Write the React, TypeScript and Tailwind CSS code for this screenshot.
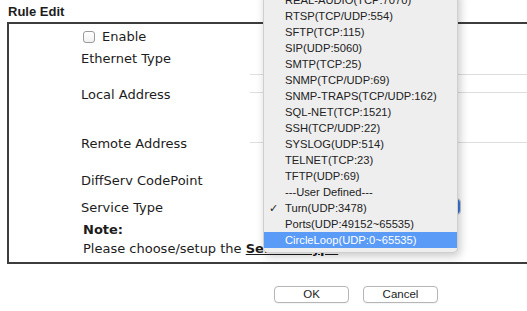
const menuItems = [
  "REAL-AUDIO(TCP:7070)",
  "RTSP(TCP/UDP:554)",
  "SFTP(TCP:115)",
  "SIP(UDP:5060)",
  "SMTP(TCP:25)",
  "SNMP(TCP/UDP:69)",
  "SNMP-TRAPS(TCP/UDP:162)",
  "SQL-NET(TCP:1521)",
  "SSH(TCP/UDP:22)",
  "SYSLOG(UDP:514)",
  "TELNET(TCP:23)",
  "TFTP(UDP:69)",
  "---User Defined---",
  "Turn(UDP:3478)",
  "Ports(UDP:49152~65535)",
  "CircleLoop(UDP:0~65535)",
];

const checked = "Turn(UDP:3478)";
const active = "CircleLoop(UDP:0~65535)";

const Label = ({ children }: { children: React.ReactNode }) => (
  <div className="w-[241px] shrink-0 pl-[72px] self-center">{children}</div>
);

export default function App() {
  return (
    <div className="relative w-[527px] h-[311px] overflow-hidden bg-white text-[#1c1c1c]">
      <div className="h-[22px] pl-[8px] pt-[4px] text-[13px] font-bold font-['Liberation_Sans',Arial,sans-serif] leading-[16px]">
        Rule Edit
      </div>

      <div className="ml-[7px] w-[640px] border-2 border-r-0 border-[#3c3c3c] font-['DejaVu_Sans',Verdana,sans-serif] text-[13px] leading-[16px]">
        <div className="flex h-[26px] items-center pl-[74px]">
          <span className="w-[12px] h-[12px] rounded-[3px] border border-[#9a9a9a] bg-gradient-to-b from-white to-[#f1f1f1]" />
          <span className="ml-[7px]">Enable</span>
        </div>
        <div className="flex h-[18px]">
          <Label>Ethernet Type</Label>
        </div>
        <div className="flex h-[54px]">
          <Label>Local Address</Label>
          <div className="flex-1">
            <div className="mt-[6px] h-[19px] border-y border-[#dedede]" />
          </div>
        </div>
        <div className="flex h-[44px]">
          <Label>Remote Address</Label>
          <div className="flex-1">
            <div className="h-[21px] border-b border-[#dedede]" />
          </div>
        </div>
        <div className="flex h-[30px]">
          <Label>DiffServ CodePoint</Label>
        </div>
        <div className="flex h-[23px]">
          <Label>Service Type</Label>
          <div className="flex-1">
            <div className="mt-[2px] ml-[16px] flex h-[17px] w-[195px] rounded-[4px] border border-[#c4c4c4] bg-white">
              <div className="ml-auto w-[18px] rounded-r-[4px] bg-[#3b78e0]" />
            </div>
          </div>
        </div>
        <div className="flex h-[21px] items-center pl-[74px] font-bold">Note:</div>
        <div className="flex h-[18px] items-center pl-[74px] whitespace-nowrap">
          Please choose/setup the&nbsp;
          <span className="font-bold underline">Service Type</span>
          &nbsp;first.
        </div>
        <div className="h-[4px]" />
      </div>

      <div className="mt-[22px] flex gap-[14px] pl-[274px] font-['Liberation_Sans',Arial,sans-serif] text-[11.5px]">
        <button className="h-[17px] w-[75px] rounded-[4px] border border-[#b5b5b5] bg-white leading-none shadow-[0_1px_0_rgba(0,0,0,0.04)]">
          OK
        </button>
        <button className="h-[17px] w-[75px] rounded-[4px] border border-[#b5b5b5] bg-white leading-none shadow-[0_1px_0_rgba(0,0,0,0.04)]">
          Cancel
        </button>
      </div>

      <div className="absolute left-[263px] top-[-9px] w-[195px] rounded-b-[5px] border border-[#cfcfcf] bg-[#eeeeee] pb-[4px] shadow-[2px_3px_10px_rgba(0,0,0,0.22)] font-['Liberation_Sans',Arial,sans-serif] text-[11.2px] text-[#222]">
        {menuItems.map((item) => (
          <div
            key={item}
            className={
              item === active
                ? "relative flex h-[16px] items-center bg-[#5a9bf8] pl-[21px] text-white"
                : "relative flex h-[16px] items-center pl-[21px]"
            }
          >
            {item === checked && (
              <span className="absolute left-[5px] text-[11px]">✓</span>
            )}
            {item}
          </div>
        ))}
      </div>
    </div>
  );
}
